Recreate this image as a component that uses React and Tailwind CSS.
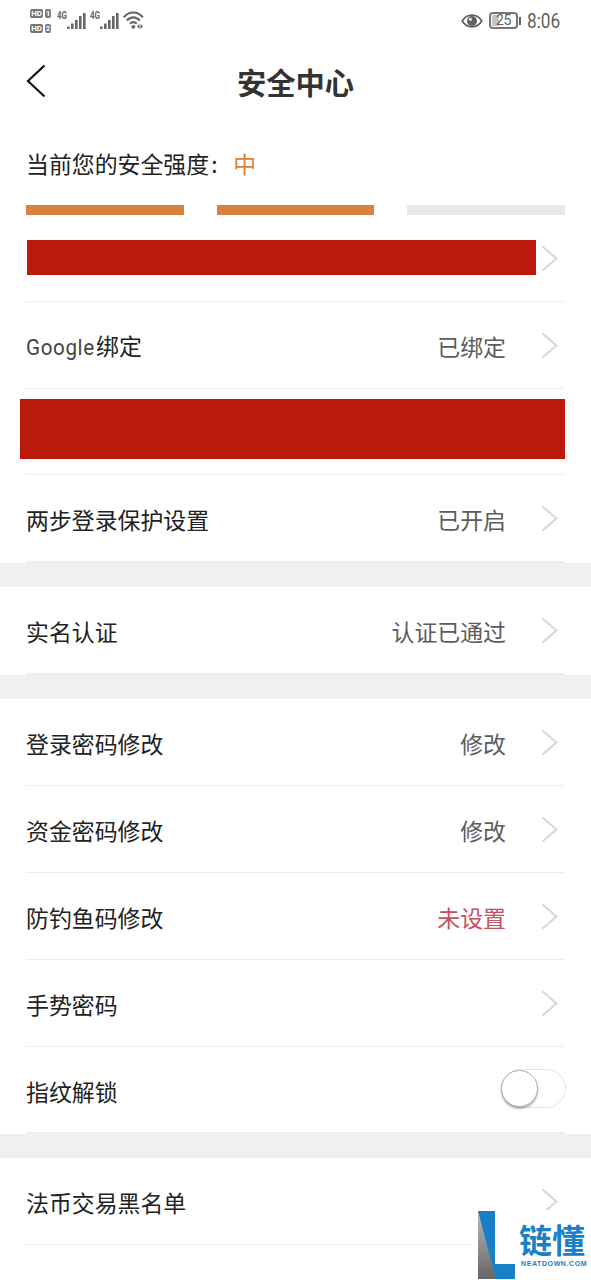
import { useState } from 'react';

const bindRows = [
  { redacted: 'narrow', height: 'h-[87px]' },
  { label: '绑定', latin: 'Google', value: '已绑定', height: 'h-[87px]' },
  { redacted: 'wide', height: 'h-[86px]' },
  { label: '两步登录保护设置', value: '已开启', height: 'h-[88px]', last: true },
];

const verifyRows = [
  { label: '实名认证', value: '认证已通过', height: 'h-[88px]', last: true },
];

const passwordRows = [
  { label: '登录密码修改', value: '修改', height: 'h-[87px]' },
  { label: '资金密码修改', value: '修改', height: 'h-[87px]' },
  { label: '防钓鱼码修改', value: '未设置', alert: true, height: 'h-[87px]' },
  { label: '手势密码', height: 'h-[87px]' },
];

function Chevron() {
  return (
    <svg className="w-[18px] h-[28px] shrink-0" viewBox="0 0 18 28" fill="none" stroke="#d6d6d6" strokeWidth="2">
      <path d="M1.500 2.500l14 12-14 12" />
    </svg>
  );
}

function HdBadge({ sim }) {
  return (
    <div className="flex gap-[2px] text-[8px] leading-[9px] font-bold text-white">
      <span className="w-[13px] h-[9px] rounded-[2px] bg-[#777] text-center tracking-tight">HD</span>
      <span className="w-[6px] h-[9px] rounded-[2px] bg-[#777] text-center">{sim}</span>
    </div>
  );
}

function Signal() {
  return (
    <div className="flex">
      <span className="w-[10px] -mt-[1px] text-[10px] leading-[10px] font-bold text-[#666] origin-left scale-x-[.8]">4G</span>
      <svg className="w-[19px] h-[18px]" viewBox="0 0 19 18" fill="#666">
        <rect x="0" y="14.500" width="2.600" height="2.500" />
        <rect x="4" y="11.500" width="2.600" height="5.500" />
        <rect x="8" y="8" width="2.600" height="9" />
        <rect x="12" y="4" width="2.600" height="13" />
        <rect x="16" y="1" width="2.600" height="16" />
      </svg>
    </div>
  );
}

function StatusBar() {
  return (
    <div className="h-[41px] pl-[30px] pr-[31px] flex items-center justify-between font-['Roboto',sans-serif]">
      <div className="flex items-center">
        <div className="flex flex-col gap-[6px] mr-[6px]">
          <HdBadge sim="1" />
          <HdBadge sim="2" />
        </div>
        <div className="flex gap-[4px]">
          <Signal />
          <Signal />
        </div>
        <svg className="w-[21px] h-[19px] ml-[4px]" viewBox="0 0 21 19" fill="none" stroke="#666" strokeWidth="2.200">
          <path d="M.8 6.300C6-.1 14.500-.1 19.800 6.300" />
          <path d="M3.800 9.500C7.500 5.200 13 5.200 16.800 9.500" />
          <path d="M7 12.700c2-2.200 4.700-2.200 6.700 0" />
          <circle cx="10.300" cy="15.800" r="1.900" fill="#666" stroke="none" />
          <path d="M14 15.500l2.500-2.500v5zM17.500 13v5l2.500-2.500z" fill="#666" stroke="none" />
        </svg>
      </div>
      <div className="flex items-center">
        <svg className="w-[22px] h-[16px]" viewBox="0 0 22 16" fill="none" stroke="#606060">
          <path d="M1.200 8C6 .2 16 .2 20.800 8C16 15.800 6 15.800 1.200 8z" strokeWidth="1.700" />
          <circle cx="11" cy="8" r="5" fill="#606060" stroke="none" />
          <circle cx="9.400" cy="6.200" r="1.500" fill="#fff" stroke="none" />
        </svg>
        <div className="ml-[6px] w-[29px] h-[17px] p-[1px] border-2 border-[#777] rounded-[4px] flex items-center bg-[linear-gradient(90deg,#c4c4c4_32%,#fff_32%)] bg-clip-content">
          <span className="w-full text-center text-[14px] leading-[13px] tracking-tight text-[#606060]">25</span>
        </div>
        <span className="ml-[1px] w-[2px] h-[8px] bg-[#606060]" />
        <span className="ml-[6px] w-[33px] text-[20px] leading-[20px] text-[#606060] origin-left scale-x-[.86] whitespace-nowrap">8:06</span>
      </div>
    </div>
  );
}

function Row({ label, latin, value, alert, redacted, height, last }) {
  return (
    <div className={`${height} mx-[26px] ${last ? 'border-b-2' : 'border-b'} border-[#eee] flex items-center justify-between pr-[6px]`}>
      {redacted === 'narrow' && <div className="ml-[1px] -mt-[2px] w-[509px] h-[35px] bg-[#ba190c]" />}
      {redacted === 'wide' && <div className="-ml-[6px] -mr-[6px] mt-[-5px] w-[545px] h-[60px] shrink-0 bg-[#ba190c]" />}
      {!redacted && (
        <>
          <span className="relative top-px text-[#222] whitespace-nowrap">
            {latin && <span className="inline-block w-[70px] font-['Roboto',sans-serif] tracking-[0.7px] text-[#444] origin-left scale-x-[.9]">{latin}</span>}
            {label}
          </span>
          <div className="flex items-center">
            {value && <span className={`relative top-px mr-[35px] ${alert ? 'text-[#c5505e]' : 'text-[#5c5c5c]'}`}>{value}</span>}
            <Chevron />
          </div>
        </>
      )}
      {redacted === 'narrow' && <Chevron />}
    </div>
  );
}

function Toggle({ on, onChange }) {
  return (
    <button onClick={() => onChange(!on)}
      className={`w-[65px] h-[39px] -mt-[2px] -mr-[7px] rounded-full border border-[#e4e4e4] flex items-center ${on ? 'justify-end bg-[#d9813e]' : 'bg-white'}`}>
      <span className="-ml-px w-[37px] h-[37px] rounded-full border border-[#b0b0b0] bg-white shadow-[0_2px_2px_rgba(0,0,0,0.3)]" />
    </button>
  );
}

function Watermark() {
  return (
    <div className="absolute left-[471px] top-[1210px] w-[120px] h-[70px] bg-white flex font-['Noto_Sans_CJK_SC',sans-serif]">
      <svg className="ml-[7px] mt-px w-[37px] h-[68px] shrink-0" viewBox="0 0 37 68">
        <defs>
          <linearGradient id="fold" x1="0" y1="0" x2="0" y2="1">
            <stop offset="0" stopColor="#bbb" />
            <stop offset="1" stopColor="#666" />
          </linearGradient>
        </defs>
        <path d="M0 0h17v53h20v15H0z" fill="#1980c8" />
        <path d="M0 0l18 68H0z" fill="url(#fold)" />
      </svg>
      <div className="ml-[4px] pt-[13px] text-[#1980c8]">
        <div className="h-[37px] text-[33px] leading-[32px] font-bold whitespace-nowrap">链懂</div>
        <div className="ml-[2px] font-['Liberation_Sans',sans-serif] text-[7px] leading-[8px] font-bold tracking-[0.600px]">NEATDOWN.COM</div>
      </div>
    </div>
  );
}

export default function App() {
  const [fingerprint, setFingerprint] = useState(false);

  return (
    <div className="relative w-[591px] h-[1280px] overflow-hidden bg-white text-[22.900px] leading-[34px] font-['Noto_Sans_CJK_SC',sans-serif]">
      <StatusBar />

      <header className="h-[84px] px-[26px] grid grid-cols-[1fr_auto_1fr] items-center">
        <svg className="-mt-[4px] w-[20px] h-[34px]" viewBox="0 0 20 34" fill="none" stroke="#111" strokeWidth="2.200">
          <path d="M18.500 1.500L2 17l16.500 15.500" />
        </svg>
        <h1 className="-mt-[4px] text-[29.300px] font-bold text-[#333]">安全中心</h1>
      </header>

      <section className="h-[90px] px-[26px] pt-[21px]">
        <div className="h-[59px] flex text-[#222]">
          <span>当前您的安全强度</span>
          <span className="w-[24px] pl-[2px]">:</span>
          <span className="text-[#d9813e]">中</span>
        </div>
        <div className="flex gap-[33px]">
          <div className="flex-1 h-[10px] bg-[#d9813e]" />
          <div className="flex-1 h-[10px] bg-[#d9813e]" />
          <div className="flex-1 h-[10px] bg-[#e8e9e9]" />
        </div>
      </section>

      {bindRows.map((row, i) => <Row key={i} {...row} />)}
      <div className="h-[24px] bg-[#f0f0f0]" />
      {verifyRows.map((row, i) => <Row key={i} {...row} />)}
      <div className="h-[24px] bg-[#f0f0f0]" />
      {passwordRows.map((row, i) => <Row key={i} {...row} />)}
      <div className="h-[87px] mx-[26px] pr-[6px] border-b-2 border-[#eee] flex items-center justify-between">
        <span className="relative top-px text-[#222]">指纹解锁</span>
        <Toggle on={fingerprint} onChange={setFingerprint} />
      </div>
      <div className="h-[24px] bg-[#f0f0f0]" />
      <Row label="法币交易黑名单" height="h-[87px]" />

      <Watermark />
    </div>
  );
}
